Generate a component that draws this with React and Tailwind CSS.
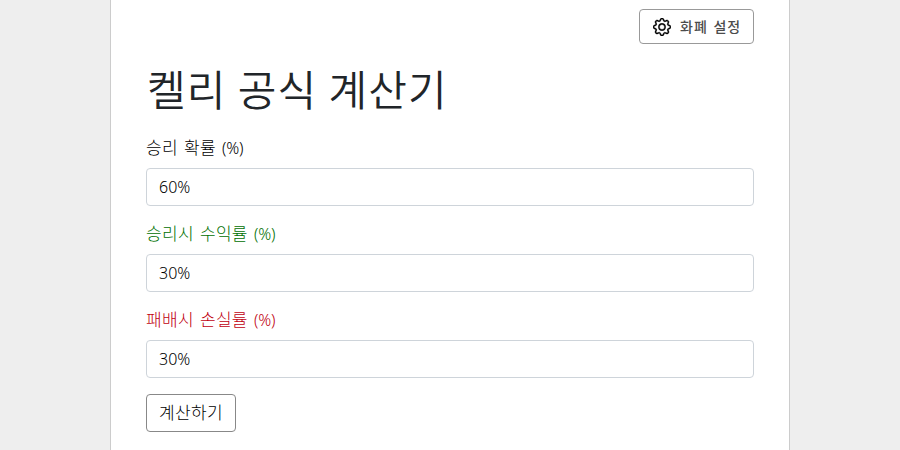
import { clsx } from 'clsx';
import { BsGear } from 'react-icons/bs';

const fields = [
  { id: 'win-rate', label: '승리 확률', value: '60%', color: 'text-black' },
  { id: 'win-return', label: '승리시 수익률', value: '30%', color: 'text-[#007000]' },
  { id: 'loss-rate', label: '패배시 손실률', value: '30%', color: 'text-[#c00010]' },
];

export default function App() {
  return (
    <div className="flex h-screen justify-center overflow-hidden bg-[#eeeeee] font-['Noto_Sans','Noto_Sans_CJK_KR',sans-serif] text-[#212529]">
      <main className="w-[680px] border-x border-[#cccccc] bg-white px-[35px] pt-[9px]">
        <div className="flex justify-end">
          <button className="flex h-[35px] w-[115px] items-center gap-[9px] rounded-[4px] border border-[#999999] pl-[13px] text-sm font-medium tracking-[1px] whitespace-nowrap text-[#4c4c4c] [word-spacing:1px]">
            <BsGear className="size-[18px] shrink-0 text-black" strokeWidth="0.4" />
            화폐 설정
          </button>
        </div>

        <h1 className="mt-[16px] h-[60px] pl-px text-[42px] leading-[60px] font-[350] tracking-[1.1px] [word-spacing:-0.8px] whitespace-nowrap">켈리 공식 계산기</h1>

        <form className="mt-[16px]" onSubmit={(e) => e.preventDefault()}>
          {fields.map((f) => (
            <Field key={f.id} {...f} />
          ))}
          <button className="h-[38px] w-[90px] rounded-[4px] border border-[#888888] text-[17px] font-light tracking-[0.3px] whitespace-nowrap text-black">
            계산하기
          </button>
        </form>
      </main>
    </div>
  );
}

function Field({ id, label, value, color }) {
  return (
    <div className="mb-4">
      <label htmlFor={id} className={clsx('mb-2 block h-6 text-[17px] leading-6 font-light tracking-[0.3px] [word-spacing:1.4px]', color)}>
        {label} <span className="text-base leading-6 tracking-[-0.2px]">(%)</span>
      </label>
      <input
        id={id}
        type="text"
        defaultValue={value}
        className="block h-[38px] w-full rounded-[4px] border border-[#ced4da] px-3 text-base font-light text-black"
      />
    </div>
  );
}
